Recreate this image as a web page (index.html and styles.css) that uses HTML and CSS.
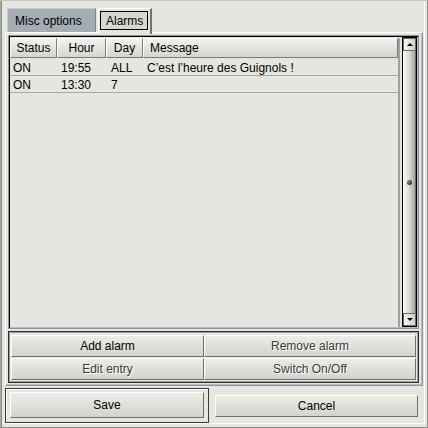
FILE: index.html
```html
<!DOCTYPE html>
<html lang="en">
<head>
    <meta charset="UTF-8">
    <title>Alarms</title>
    <link rel="stylesheet" href="styles.css">
</head>
<body>

<div class="window">
    <div class="tabs">
        <div class="tab">Misc options</div>
        <div class="tab active"><span class="focus">Alarms</span></div>
    </div>

    <div class="page">
        <div class="list">
            <div class="table">
                <div class="row head">
                    <div class="col c-status">Status</div>
                    <div class="col c-hour">Hour</div>
                    <div class="col c-day">Day</div>
                    <div class="col c-msg">Message</div>
                </div>
                <div class="row">
                    <div class="cell c-status">ON</div>
                    <div class="cell c-hour">19:55</div>
                    <div class="cell c-day">ALL</div>
                    <div class="cell c-msg">C’est l’heure des Guignols !</div>
                </div>
                <div class="row">
                    <div class="cell c-status">ON</div>
                    <div class="cell c-hour">13:30</div>
                    <div class="cell c-day">7</div>
                    <div class="cell c-msg"></div>
                </div>
            </div>
            <div class="scrollbar">
                <div class="arrow up"></div>
                <div class="slider"><span class="grip"></span></div>
                <div class="arrow down"></div>
            </div>
        </div>

        <div class="actions">
            <button class="button">Add alarm</button>
            <button class="button dim">Remove alarm</button>
            <button class="button dim">Edit entry</button>
            <button class="button dim">Switch On/Off</button>
        </div>
    </div>

    <div class="footer">
        <div class="default"><button class="button big">Save</button></div>
        <button class="button big cancel">Cancel</button>
    </div>
</div>

</body>
</html>
```

FILE: styles.css
```css
* {
    margin: 0;
    padding: 0;
    box-sizing: border-box;
}

body {
    font-family: "Liberation Sans", Arial, sans-serif;
    font-size: 12px;
    color: #000;
    background-color: #e6e6e0;
}

.window {
    width: 428px;
    height: 428px;
    border-left: 1px solid #a8a8a4;
    border-top: 1px solid #c4c4c0;
    border-right: 1px solid #8c8c88;
    border-bottom: 1px solid #8c8c88;
    box-shadow: inset 1px 0 0 #8a8a86, inset -2px -3px 0 #e6e6e0, inset -3px -4px 0 #ffffff;
    padding: 7px 0 0 4px;
    display: flex;
    flex-direction: column;
}

/* tabs */
.tabs {
    display: flex;
    height: 24px;
    padding-left: 2px;
    gap: 2px;
}

.tab {
    width: 89px;
    height: 24px;
    padding: 5px 0 0 7px;
    background-color: #a4acb4;
    border-top: 1px solid #c8ccd0;
    border-left: 1px solid #c8ccd0;
    border-right: 1px solid #7c848c;
}

.tab.active {
    width: 54px;
    height: 26px;
    padding: 2px 2px 2px 1px;
    background-color: #e6e6e0;
    border-top: 1px solid #ffffff;
    border-left: 1px solid #ffffff;
    border-right: 2px solid #6c747c;
    position: relative;
    z-index: 1;
}

.focus {
    display: block;
    height: 19px;
    border: 1px solid #000;
    padding: 2px 0 0 5px;
    background-color: #d8d8d2;
}

.page {
    width: 418px;
    height: 354px;
    border-top: 1px solid #ffffff;
    border-left: 1px solid #ffffff;
    border-right: 1px solid #8c949c;
    border-bottom: 1px solid #8c949c;
    box-shadow: inset -1px -1px 0 #b4bcc4;
    padding: 2px 3px 2px 2px;
    display: flex;
    flex-direction: column;
    gap: 2px;
}

/* list */
.list {
    height: 294px;
    display: flex;
    border: 1px solid #8c949c;
    box-shadow: inset 1px 1px 0 #000, inset -1px -1px 0 #b4bcc4;
    padding: 2px 1px 1px 1px;
}

.table {
    flex: 1;
    border-right: 2px solid #9aa2aa;
}

.row {
    display: flex;
    height: 17px;
    border-bottom: 1px solid #a8a8a4;
}

.row.head {
    height: 20px;
    border-bottom: none;
    margin-bottom: 1px;
}

.col {
    height: 20px;
    padding: 2px 0 0 0;
    text-align: center;
    background: linear-gradient(#f2f2ee, #d6d6d0);
    border-top: 1px solid #ffffff;
    border-left: 1px solid #ffffff;
    border-right: 1px solid #7a7a76;
    border-bottom: 1px solid #7a7a76;
}

.col.c-msg {
    text-align: left;
    padding-left: 6px;
}

.cell {
    padding: 2px 0 0 3px;
}

.c-status { width: 47px; }
.c-hour { width: 49px; padding-left: 4px; }
.c-day { width: 37px; padding-left: 5px; }
.c-msg { flex: 1; }
.cell.c-msg { padding-left: 4px; }

.head .c-hour, .head .c-day { padding-left: 0; }

.scrollbar {
    width: 15px;
    display: flex;
    flex-direction: column;
    border: 1px solid #000;
    margin-left: 2px;
    margin-top: -1px;
    background-color: #c8c8c4;
}

.arrow {
    height: 13px;
    background: linear-gradient(90deg, #f6f6f2, #d0d0ca);
    border: 1px solid #6a6a66;
    position: relative;
}

.arrow::after {
    content: "";
    position: absolute;
    left: 3px;
    border-left: 3px solid transparent;
    border-right: 3px solid transparent;
}

.arrow.up::after {
    top: 4px;
    border-bottom: 3px solid #000;
}

.arrow.down::after {
    top: 4px;
    border-top: 3px solid #000;
}

.slider {
    flex: 1;
    background: linear-gradient(90deg, #f4f4f0, #e0e0da 40%, #a8a8a2);
    border-left: 1px solid #ffffff;
    border-right: 1px solid #6a6a66;
    display: flex;
    align-items: center;
    justify-content: center;
}

.grip {
    width: 5px;
    height: 5px;
    border-radius: 50%;
    background: radial-gradient(circle at 35% 35%, #888, #111);
}

/* button group */
.actions {
    height: 52px;
    display: grid;
    grid-template-columns: 193px 1fr;
    border: 1px solid #2c2c2c;
    box-shadow: inset 1px 1px 0 #9aa2aa, inset -1px -1px 0 #9aa2aa;
    padding: 3px 2px 2px 2px;
}

.button {
    font-family: "Liberation Sans", Arial, sans-serif;
    font-size: 12px;
    color: #000;
    background: linear-gradient(#ecece8, #d4d4ce);
    border-top: 1px solid #ffffff;
    border-left: 1px solid #ffffff;
    border-right: 1px solid #6e6e6a;
    border-bottom: 1px solid #6e6e6a;
    height: 23px;
    cursor: pointer;
}

.actions .button {
    height: 22px;
}

.button.dim {
    color: #3a3a3a;
    text-shadow: 1px 1px 0 #ffffff;
}

/* footer */
.footer {
    display: flex;
    align-items: flex-start;
    padding-top: 2px;
    gap: 6px;
}

.default {
    width: 204px;
    height: 35px;
    border: 1px solid #3a3a3a;
    box-shadow: inset 1px 1px 0 #ffffff;
    padding: 3px 4px 3px 4px;
}

.button.big {
    width: 194px;
    height: 26px;
}

.button.cancel {
    width: 203px;
    height: 22px;
    margin-top: 7px;
}
```
